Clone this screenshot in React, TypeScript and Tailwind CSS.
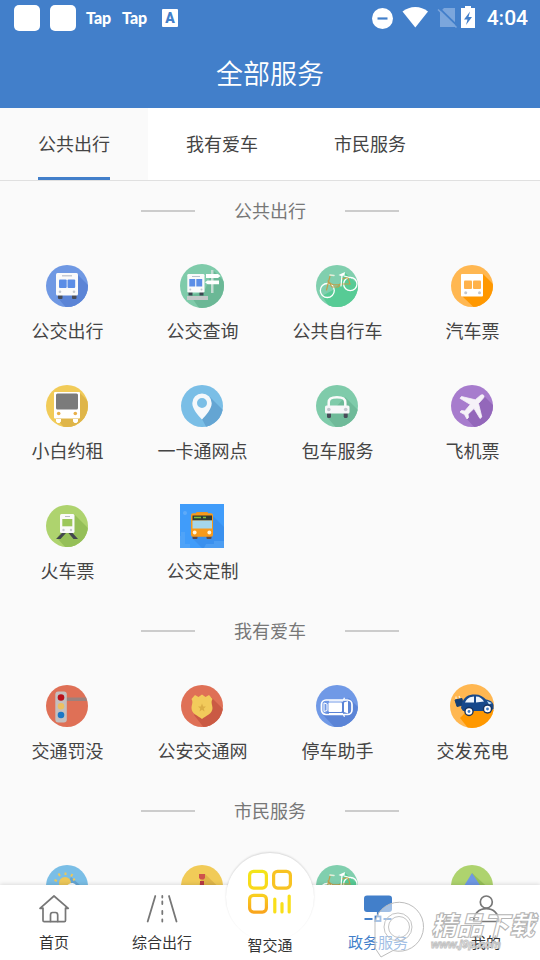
import { useId, useState } from "react";
import type { ReactNode } from "react";

// one entry in a service grid
interface Service {
  label?: string;
  icon: ReactNode;
}

interface Section {
  title: string;
  services: Service[];
}

// round coloured background with the long diagonal shadow
function Disc({
  color,
  shade,
  shadow = "M32 10L54 32V54H30L12 33Z",
  r = 21,
  children,
}: {
  color: string;
  shade?: string;
  shadow?: string;
  r?: number;
  children: ReactNode;
}) {
  const id = useId();
  return (
    <svg viewBox="0 0 45 44" className="h-11 w-[45px]" aria-hidden="true">
      <clipPath id={id}>
        <circle cx="22" cy="22" r={r} />
      </clipPath>
      <circle cx="22" cy="22" r={r} fill={color} />
      {shade && <path d={shadow} fill={shade} clipPath={`url(#${id})`} />}
      {children}
    </svg>
  );
}

const BusIcon = () => (
  <Disc color="#6f98e3" shade="#5b84d6">
    <rect x="13" y="30" width="4.5" height="5" rx="1" fill="#474c58" />
    <rect x="27" y="30" width="4.5" height="5" rx="1" fill="#474c58" />
    <rect x="11" y="9" width="22" height="22.5" rx="1.5" fill="#fafafa" />
    <rect x="17" y="11" width="10" height="1.5" fill="#c5cad3" />
    <rect x="14" y="15.5" width="7.7" height="8.5" rx="1" fill="#5b8de6" />
    <rect x="22.5" y="15.5" width="7.7" height="8.5" rx="1" fill="#5b8de6" />
    <circle cx="15" cy="27.7" r="1.3" fill="#c3c7ce" />
    <circle cx="29" cy="27.7" r="1.3" fill="#c3c7ce" />
  </Disc>
);

const BusStopIcon = () => (
  <Disc color="#7fcbaa" shade="#6bb896" r={22} shadow="M33 6L60 33V54H26L10 31L24 28Z">
    <rect x="7" y="32" width="21" height="4" fill="#c4c8c8" />
    <rect x="31" y="6" width="2.5" height="23" fill="#c3dcd2" />
    <path d="M26 10H38L40.500 12L38 14H26Z" fill="#fff" />
    <path d="M39 16.500H27.500L25 18.300L27.500 20.200H39Z" fill="#fff" />
    <rect x="8.500" y="28" width="4" height="3.500" fill="#3c4650" />
    <rect x="19.500" y="28" width="4" height="3.500" fill="#3c4650" />
    <rect x="7.300" y="10" width="17.200" height="18.500" rx="1.300" fill="#fafafa" />
    <rect x="12" y="12" width="8" height="1" fill="#b9c2cc" />
    <rect x="9.300" y="15" width="5.900" height="7.500" fill="#5b8de6" />
    <rect x="16.300" y="15" width="5.900" height="7.500" fill="#5b8de6" />
    <circle cx="10.300" cy="25.500" r="1" fill="#c3c7ce" />
    <circle cx="21.500" cy="25.500" r="1" fill="#c3c7ce" />
  </Disc>
);

const BikeIcon = () => (
  <Disc color="#80cfae" shade="#57cb95" shadow="M29 8L54 30V54H22L7 32L18 26L27 17Z">
    <g fill="none" strokeLinecap="round">
      <circle cx="12.300" cy="26.500" r="7" stroke="#fff" strokeWidth="1.300" />
      <circle cx="35.300" cy="20" r="6.700" stroke="#fff" strokeWidth="1.300" />
      <path d="M11.500 26L15 12M13 17C16 21 20 22 26 20M26 20L35 20L33 13.500L27 15M26 20L23 23H17L13.500 18" stroke="#bfa04c" strokeWidth="1.200" />
      <path d="M15 11L19 11.500" stroke="#e5eedb" strokeWidth="1.500" />
      <path d="M27 11L26 22M29 12L37 14" stroke="#fff" strokeWidth="1.200" />
    </g>
    <path d="M23.500 11L30 8L29.500 11.500L26 12Z" fill="#fff" />
  </Disc>
);

const CoachIcon = () => (
  <Disc color="#ffb751" shade="#ff9800" shadow="M33 10L54 31V54H35L12 32Z">
    <rect x="11" y="10" width="22" height="22.5" rx="1" fill="#fff" />
    <rect x="14" y="16.5" width="8" height="8.5" rx="1" fill="#ffb24a" />
    <rect x="23" y="16.5" width="8" height="8.5" rx="1" fill="#ffb24a" />
    <circle cx="15.700" cy="28.700" r="1.500" fill="#c3c7ce" />
    <circle cx="29.500" cy="28.700" r="1.500" fill="#c3c7ce" />
  </Disc>
);

const CharterBusIcon = () => (
  <Disc color="#f1cb58" shade="#dfb549" shadow="M35 9L54 28V54H28L11 34Z">
    <path d="M11 35H16V37.500L14.500 39H12.500L11 37.500ZM28 35H33V37.500L31.500 39H29.500L28 37.500Z" fill="#fff" />
    <rect x="9" y="8" width="26" height="26.500" rx="1" fill="#fff" />
    <rect x="11" y="9.500" width="22" height="16" rx="1.500" fill="#7b7b7b" />
    <circle cx="13.700" cy="29.500" r="1.800" fill="#e8b04a" />
    <circle cx="30.300" cy="29.500" r="1.800" fill="#e8b04a" />
  </Disc>
);

const PinIcon = () => (
  <Disc color="#7abee6" shade="#64a5d3" shadow="M30 13L54 37V54H32L22 35Z">
    <path
      d="M22 9.500A9.700 9.700 0 0 1 31.700 19.200C31.700 25 26 31 22 35.500C18 31 12.300 25 12.300 19.200A9.700 9.700 0 0 1 22 9.500ZM22 14A5 5 0 1 0 22 24A5 5 0 1 0 22 14Z"
      fill="#f5f8fb"
      fillRule="evenodd"
    />
  </Disc>
);

const CarIcon = () => (
  <Disc color="#7fcbaa" shade="#6fba99" shadow="M30 13L54 37V54H30L12 33Z">
    <rect x="12" y="28" width="4" height="6" rx="1.500" fill="#474c58" />
    <rect x="28.700" y="28" width="4" height="6" rx="1.500" fill="#474c58" />
    <path d="M13.700 22V18.500C13.700 14.500 16 13.300 22 13.300S30.300 14.500 30.300 18.500V22" fill="none" stroke="#fafafa" strokeWidth="2.500" />
    <rect x="10" y="21.500" width="24.500" height="8" rx="1.500" fill="#f7f7f9" />
    <circle cx="13.800" cy="25.500" r="1.800" fill="#c3c7ce" />
    <circle cx="30.700" cy="25.500" r="1.800" fill="#c3c7ce" />
  </Disc>
);

const PlaneIcon = () => (
  <Disc color="#a77ccd" shade="#9367ba" shadow="M33 11L54 32V54H34L16 34Z">
    <path
      d="M33.500 11.200C34.500 12.200 34 13.500 33 14.500L28.500 19.500L31.800 33L30 34.500L24 24.500L18 30.200L18.500 33.500L17 35L14.500 30.500L10 28L11.500 26.500L14.800 27L20.300 20.500L10 14.300L11.500 12.500L25.300 15.800L30 11.800C31 10.800 32.500 10.300 33.500 11.200Z"
      fill="#f5f1f8"
      stroke="#f5f1f8"
      strokeWidth=".8"
      strokeLinejoin="round"
    />
  </Disc>
);

const TrainIcon = () => (
  <Disc color="#aed36e" shade="#95bf58" shadow="M29 10L54 35V54H30L12 34Z">
    <path d="M17 29H21L15.500 35H11ZM23.500 29H27.500L33 35H28.500Z" fill="#42474d" />
    <rect x="15" y="10" width="14.500" height="19" rx="1.500" fill="#fafafa" />
    <rect x="20" y="12" width="5" height="1" fill="#b9bec5" />
    <rect x="17.300" y="15" width="10" height="7.300" fill="#9cc75c" />
    <circle cx="18.500" cy="26" r="1.200" fill="#c3c7ce" />
    <circle cx="26" cy="26" r="1.200" fill="#c3c7ce" />
  </Disc>
);

const CustomBusIcon = () => (
  <svg viewBox="0 0 45 44" className="h-11 w-[45px]" aria-hidden="true">
    <rect width="44" height="44" fill="#409cfa" />
    <path d="M33 12L44 23V44H22L12 34Z" fill="#3a90ee" />
    <path d="M0 32H1V28H5V40H10V44H0ZM26 40H34V37H44V44H24Z" fill="#5eaaf5" opacity=".5" />
    <circle cx="5" cy="9" r="2" fill="#5eaaf8" />
    <rect x="12.500" y="31" width="5" height="4" rx="1" fill="#5a4a4e" />
    <rect x="26.500" y="31" width="5" height="4" rx="1" fill="#5a4a4e" />
    <rect x="16" y="8" width="12" height="3" rx="1" fill="#e8952a" />
    <rect x="11" y="9.300" width="22" height="23.500" rx="2" fill="#f79a1c" />
    <rect x="12.500" y="11.500" width="19.500" height="5" fill="#2e3a38" />
    <path d="M14 13.500H21M23 13.500H26" stroke="#7fbf3f" strokeWidth="1.300" />
    <rect x="12.500" y="16.500" width="19.500" height="8" fill="#a5d6ea" />
    <circle cx="14.700" cy="28.500" r="1.900" fill="#fff6dc" />
    <circle cx="29.300" cy="28.500" r="1.900" fill="#fff6dc" />
  </svg>
);

const TrafficLightIcon = () => (
  <Disc color="#df7056">
    <path d="M21 13.500H41L42 17H21Z" fill="#9d817c" />
    <rect x="10.300" y="7.500" width="11.500" height="31" rx="3" fill="#c4bfbf" />
    <circle cx="16" cy="13.500" r="3.300" fill="#b9101a" />
    <circle cx="16" cy="22.300" r="3.300" fill="#ecc062" />
    <circle cx="16" cy="31" r="3.300" fill="#1a77c6" />
  </Disc>
);

const BadgeIcon = () => (
  <Disc color="#df7056" shade="#ca5a44" shadow="M31 13L54 36V54H32L14 31Z">
    <path
      d="M15 11L18.500 13L22 10.500L25.500 13L29 11L32.500 15C30.500 18 32.500 21 32.500 24C32.500 30 26 31.500 22 35C18 31.500 11.500 30 11.500 24C11.500 21 13.500 18 11.500 15Z"
      fill="#f2cb5b"
    />
    <path d="M22 19.500L23.200 22.400L26 22.600L23.800 24.500L24.500 27.500L22 25.800L19.500 27.500L20.200 24.500L18 22.600L20.800 22.400Z" fill="#dcae45" />
  </Disc>
);

const ParkingIcon = () => (
  <Disc color="#7099e6" shade="#5b84d6" shadow="M34 14L54 34V54H30L8 31Z">
    <rect x="6.500" y="16" width="30.500" height="14.500" rx="4.500" fill="none" stroke="#fff" strokeWidth="1.700" />
    <rect x="13.500" y="18.500" width="13.500" height="9.500" rx="1" fill="#fff" />
    <path d="M29 18.500L33 17V29.500L29 28Z" fill="#fff" />
    <path d="M9 19L12 20V26.500L9 27.500ZM14 17H28M14 29.500H28" fill="none" stroke="#fff" strokeWidth="1" />
    <path d="M28.500 16L29.500 13.700M28.500 30.500L29.500 32.800" stroke="#fff" strokeWidth="1.300" />
  </Disc>
);

const ChargingIcon = () => (
  <Disc color="#ffb751" shade="#ff9800" r={22} shadow="M40 24L54 32V54H26L10 34L16 28Z">
    <path d="M5 16L12 14.500L13 21L7 22.500ZM12 19L14 24" fill="#153f74" stroke="#153f74" strokeWidth="1" />
    <path d="M6 15V12.500M10 14L9 12" stroke="#fff2d8" strokeWidth="1.200" />
    <path d="M12 19C14 13 18 10.500 25 10.500C30 10.500 33 12.500 36 15.500C40 16 43 18 43.500 21V25L40 27H13L11 24Z" fill="#17498b" />
    <path d="M15 18.500C17 14 20 12.700 24 12.500V18.500ZM26 12.500C30 12.500 32 14.500 34 17.500L26 18.500Z" fill="#eef5fc" />
    <path d="M37 17L42 19L39 20.500Z" fill="#bfe0f5" />
    <circle cx="19" cy="27.500" r="4.700" fill="#17335e" />
    <circle cx="19" cy="27.500" r="3.300" fill="#fff" />
    <circle cx="19" cy="27.500" r="1.400" fill="#3d7ac4" />
    <circle cx="37.500" cy="25" r="4.700" fill="#17335e" />
    <circle cx="37.500" cy="25" r="3.300" fill="#fff" />
    <circle cx="37.500" cy="25" r="1.400" fill="#3d7ac4" />
  </Disc>
);

const WeatherIcon = () => (
  <Disc color="#7abee6" shade="#64a5d3" shadow="M26 13L54 38V54H30L20 24Z">
    <circle cx="20" cy="19" r="6" fill="#ecc75a" />
    <path d="M9.500 16L12 17M13.500 9.500L15 12M20.500 8.500V11M27.500 10L26 12.500M30 15L28 16" stroke="#ecc75a" strokeWidth="2" />
    <path d="M22 25A4 4 0 0 1 24 20A5 5 0 0 1 31 21A3 3 0 0 1 31 27H22Z" fill="#f5f8fb" />
  </Disc>
);

const MedalIcon = () => (
  <Disc color="#f1cb58" shade="#dfb549" shadow="M25 10L54 38V54H30L19 20Z">
    <path d="M19 10H25V14L23.500 15.500H20.500L19 14Z" fill="#cf524c" />
    <path d="M20 17H24V24H20Z" fill="#b83a44" />
  </Disc>
);

const SailIcon = () => (
  <Disc color="#aed36e" shade="#95bf58" shadow="M22 9L54 38V54H22Z">
    <path d="M22 9L30.500 22H14Z" fill="#6f98e3" />
  </Disc>
);

const sections: Section[] = [
  {
    title: "公共出行",
    services: [
      { label: "公交出行", icon: <BusIcon /> },
      { label: "公交查询", icon: <BusStopIcon /> },
      { label: "公共自行车", icon: <BikeIcon /> },
      { label: "汽车票", icon: <CoachIcon /> },
      { label: "小白约租", icon: <CharterBusIcon /> },
      { label: "一卡通网点", icon: <PinIcon /> },
      { label: "包车服务", icon: <CarIcon /> },
      { label: "飞机票", icon: <PlaneIcon /> },
      { label: "火车票", icon: <TrainIcon /> },
      { label: "公交定制", icon: <CustomBusIcon /> },
    ],
  },
  {
    title: "我有爱车",
    services: [
      { label: "交通罚没", icon: <TrafficLightIcon /> },
      { label: "公安交通网", icon: <BadgeIcon /> },
      { label: "停车助手", icon: <ParkingIcon /> },
      { label: "交发充电", icon: <ChargingIcon /> },
    ],
  },
  {
    title: "市民服务",
    services: [
      { icon: <WeatherIcon /> },
      { icon: <MedalIcon /> },
      { icon: <BikeIcon /> },
      { icon: <SailIcon /> },
    ],
  },
];

function StatusBar() {
  return (
    <div className="flex h-9 items-center justify-between pl-3.5 pr-3">
      <div className="flex items-center gap-2.5">
        <span className="size-[26px] rounded-[5px] bg-white" />
        <span className="size-[26px] rounded-[5px] bg-white" />
        <span className="w-[26px] font-['Lato'] text-base leading-5 font-black">Tap</span>
        <span className="w-[26px] font-['Lato'] text-base leading-5 font-black">Tap</span>
        <span className="ml-1 flex h-[18px] w-4 items-center justify-center rounded-[1px] bg-white font-['Roboto'] text-sm font-black text-[#427fca]">
          A
        </span>
      </div>
      <div className="flex items-center">
        <svg viewBox="0 0 103 24" className="h-6 w-[103px]" aria-hidden="true">
          <circle cx="10.500" cy="12.500" r="10.500" fill="#fff" />
          <path d="M5.500 12.500H15.500" stroke="#427fca" strokeWidth="2.200" />
          <path d="M43.300 21.500L30.500 5.500C34.500 2.500 38.500 1 43.300 1S52.200 2.500 56 5.500Z" fill="#fff" />
          <path d="M68 21V6L72 2H83V21Z" fill="#7ba6dc" />
          <path d="M67.500 2.500L85 19.500" stroke="#427fca" strokeWidth="1.800" />
          <path d="M66 3.500L84.500 21.500" stroke="#7ba6dc" strokeWidth="1.600" />
          <path d="M99 2H103V22H89V2H93V0H99Z" fill="#fff" />
          <path d="M98 5.500L92 13.500H95.500L94 19L100 11H96.500Z" fill="#427fca" />
        </svg>
        <span className="ml-3 font-['Roboto'] text-[21px] font-medium leading-6">4:04</span>
      </div>
    </div>
  );
}

function SectionTitle({ title }: { title: string }) {
  return (
    <div className="flex h-[60px] items-center justify-center gap-[39px]">
      <span className="h-0.5 w-[54px] bg-[#cccccc]" />
      <h2 className="pb-0.5 text-lg text-[#777777]">{title}</h2>
      <span className="h-0.5 w-[54px] bg-[#cccccc]" />
    </div>
  );
}

// bottom bar icons
const HomeIcon = () => (
  <svg viewBox="0 0 32 32" className="size-8" fill="none" stroke="#777" strokeWidth="1.700" strokeLinecap="round" strokeLinejoin="round" aria-hidden="true">
    <path d="M5 15V27.500Q5 28.700 6.200 28.700H26.300Q27.500 28.700 27.500 27.500V15M5 15.300H2L16 3L30.300 15.300H27.500" />
    <path d="M12.500 28.500V22Q12.500 19.500 14.500 19.500H17.500Q19.700 19.500 19.700 22V28.500" />
  </svg>
);

const RoadIcon = () => (
  <svg viewBox="0 0 32 32" className="size-8" fill="none" stroke="#777" strokeWidth="1.800" strokeLinecap="round" aria-hidden="true">
    <path d="M9.300 3L1.700 28.500M23 3L30.500 28.500" />
    <path d="M16.300 3V4.500M16.300 8.500V11M16.300 18V21M16.300 26.500V28.500" />
  </svg>
);

const ServiceDeskIcon = () => (
  <svg viewBox="0 0 32 32" className="size-8" fill="none" stroke="#427fca" strokeWidth="1.800" aria-hidden="true">
    <rect x="2" y="2.500" width="28" height="16.500" rx="3" fill="#427fca" stroke="none" />
    <path d="M15.800 18V23M2.500 26H10.500M21.500 26H29.500" />
    <rect x="13.500" y="23.500" width="5" height="4.500" />
  </svg>
);

const UserIcon = () => (
  <svg viewBox="0 0 32 32" className="size-8" fill="none" stroke="#777" strokeWidth="1.700" strokeLinejoin="round" aria-hidden="true">
    <circle cx="16.300" cy="9" r="6" />
    <path d="M3.700 28.500C3.700 20.500 9 15.700 16.300 15.700S28.700 20.500 28.700 28.500Z" />
  </svg>
);

const SmartIcon = () => (
  <svg viewBox="0 0 44 46" className="h-[46px] w-11" fill="none" strokeWidth="3.200" aria-hidden="true">
    <defs>
      <linearGradient id="smart-a" x1="0" y1="0" x2="0" y2="1">
        <stop offset="0" stopColor="#f3e51b" />
        <stop offset="1" stopColor="#f9d81a" />
      </linearGradient>
      <linearGradient id="smart-b" x1="0" y1="0" x2="0" y2="1">
        <stop offset="0" stopColor="#f9cf20" />
        <stop offset="1" stopColor="#f9a51c" />
      </linearGradient>
    </defs>
    <rect x="1.600" y="2.300" width="16.800" height="16.800" rx="4" stroke="url(#smart-a)" />
    <rect x="25.600" y="2.300" width="16.800" height="16.800" rx="4" stroke="#f8c323" />
    <rect x="1.600" y="26.300" width="16.800" height="16.800" rx="4" stroke="url(#smart-b)" />
    <path d="M26.800 30V43M34 34.500V43M41.200 27V43" stroke="#f9df1a" strokeLinecap="round" />
  </svg>
);

const navItems = [
  { label: "首页", icon: <HomeIcon /> },
  { label: "综合出行", icon: <RoadIcon /> },
  { label: "智交通", icon: <SmartIcon />, raised: true },
  { label: "政务服务", icon: <ServiceDeskIcon />, active: true },
  { label: "我的", icon: <UserIcon /> },
];

function BottomNav() {
  return (
    <nav className="relative grid h-[75px] shrink-0 grid-cols-5 bg-white shadow-[0_-1px_4px_rgba(0,0,0,0.12)]">
      {navItems.map((item) =>
        item.raised ? (
          <a key={item.label} href="#" className="relative flex flex-col items-center justify-end pb-[5px] text-[15px] leading-5 text-[#333333]">
            <span className="absolute -top-8 flex size-[88px] justify-center rounded-full bg-white pt-4 shadow-[0_-1px_2px_rgba(0,0,0,0.14)]">
              {item.icon}
            </span>
            <span className="relative">{item.label}</span>
          </a>
        ) : (
          <a
            key={item.label}
            href="#"
            className={`flex flex-col items-center gap-[7px] pt-2 text-[15px] leading-5 ${
              item.active ? "text-[#427fca]" : "text-[#333333]"
            }`}
          >
            {item.icon}
            <span>{item.label}</span>
          </a>
        )
      )}
    </nav>
  );
}

// download site mark lying over the bottom bar
function Watermark() {
  return (
    <div className="pointer-events-none absolute bottom-0 right-[5px] flex items-start gap-1">
      <svg viewBox="0 0 54 60" className="h-[60px] w-[54px]" aria-hidden="true">
        <path
          d="M2 48V22A24.500 24.500 0 1 1 20 50.500L8 57Z"
          fill="#fff"
          fillOpacity=".5"
          stroke="#bdbdbd"
        />
        <circle cx="25" cy="27" r="14" fill="none" stroke="#c4c4c4" />
        <circle cx="26" cy="27" r="10.500" fill="#fff" fillOpacity=".5" stroke="#c4c4c4" />
      </svg>
      <div className="flex flex-col italic text-white/60">
        <span className="pt-2.5 text-[26px] font-black leading-7 [-webkit-text-stroke:1px_#b5b5b5]">精品下载</span>
        <span className="font-['Liberation_Sans'] text-[11px] font-bold leading-3 [-webkit-text-stroke:1px_#c4c4c4]">www.j9p.com</span>
      </div>
    </div>
  );
}

export default function App() {
  const [activeTab, setActiveTab] = useState("公共出行");

  return (
    <div className="relative flex h-screen flex-col overflow-hidden bg-[#fafafa] font-['Noto_Sans_CJK_SC',sans-serif] text-[#444444]">
      <header className="shrink-0 bg-[#427fca] text-white">
        <StatusBar />
        <h1 className="flex h-[72px] items-center justify-center pt-0.5 text-[27px] font-[350]">全部服务</h1>
      </header>

      {/* category tabs */}
      <div className="flex h-[73px] shrink-0 border-b border-[#e0e0e0] bg-white">
        {sections.map((section) => (
          <button
            key={section.title}
            onClick={() => setActiveTab(section.title)}
            className={`px-[38px] text-lg ${activeTab === section.title ? "bg-[#fafafa]" : "bg-white"}`}
          >
            <span
              className={`flex h-full items-center border-b-3 ${
                activeTab === section.title ? "border-[#427fca]" : "border-transparent"
              }`}
            >
              {section.title}
            </span>
          </button>
        ))}
      </div>

      <main className="min-h-0 flex-1 overflow-y-auto [scrollbar-width:none]">
        {sections.map((section) => (
          <section key={section.title}>
            <SectionTitle title={section.title} />
            <div className="grid grid-cols-4">
              {section.services.map((service, i) => (
                <a key={i} href="#" className="flex h-[120px] flex-col items-center gap-2 pt-[23px]">
                  {service.icon}
                  {service.label && <span className="whitespace-nowrap text-lg">{service.label}</span>}
                </a>
              ))}
            </div>
          </section>
        ))}
      </main>

      <BottomNav />
      <Watermark />
    </div>
  );
}
